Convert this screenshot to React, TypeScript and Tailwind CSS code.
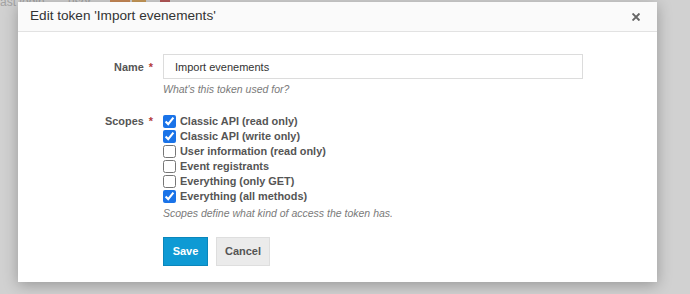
import React from 'react';

const scopes: { label: string; checked: boolean }[] = [
  { label: 'Classic API (read only)', checked: true },
  { label: 'Classic API (write only)', checked: true },
  { label: 'User information (read only)', checked: false },
  { label: 'Event registrants', checked: false },
  { label: 'Everything (only GET)', checked: false },
  { label: 'Everything (all methods)', checked: true },
];

const Required = () => <span className="ml-[5px] text-[#b33a3a]">*</span>;

export default function App() {
  return (
    <div className="relative h-[294px] w-[690px] overflow-hidden bg-[#d1d1d1] font-['Liberation_Sans',Arial,sans-serif]">
      {/* page behind the overlay */}
      <div className="absolute left-0 top-[-7px] text-[12px] text-[#a3a3a3]">ast login &nbsp; &nbsp; &nbsp; user</div>
      <div className="absolute left-[110px] top-0 flex h-[2px] gap-[2px]">
        <div className="w-[20px] bg-[#c98a57]" />
        <div className="w-[14px] bg-[#c99a5a]" />
        <div className="ml-[12px] w-[10px] bg-[#b65a5a]" />
      </div>

      {/* modal */}
      <div className="absolute left-[18px] top-[2px] h-[280px] w-[639px] bg-white shadow-[0_3px_14px_rgba(0,0,0,0.28)]">
        <div className="flex h-[30px] items-center justify-between border-b border-[#e2e2e2] bg-[#fafafa] pl-[12px] pr-[17px]">
          <h4 className="text-[13.6px] text-[#333]">Edit token 'Import evenements'</h4>
          <svg width="8" height="8" viewBox="0 0 10 10" className="mt-[1px]">
            <path d="M1.5 1.5 L8.5 8.5 M8.5 1.5 L1.5 8.5" stroke="#666" strokeWidth="2.4" strokeLinecap="square" />
          </svg>
        </div>

        <div className="pt-[22px] text-[10.9px] text-[#555]">
          {/* Name */}
          <div className="flex">
            <div className="w-[145px] pr-[10px] pt-[5px] text-right font-bold">
              Name<Required />
            </div>
            <div className="w-[420px]">
              <input
                type="text"
                defaultValue="Import evenements"
                className="h-[25px] w-full border border-[#dcdcdc] px-[11px] text-[11px] text-[#333] outline-none"
              />
              <p className="mt-[3px] text-[10.5px] italic text-[#7a7a7a]">What's this token used for?</p>
            </div>
          </div>

          {/* Scopes */}
          <div className="mt-[16px] flex">
            <div className="w-[145px] pr-[10px] text-right font-bold leading-[15px]">
              Scopes<Required />
            </div>
            <div>
              {scopes.map((s) => (
                <label key={s.label} className="flex h-[15px] items-center gap-[4px] font-bold">
                  <input type="checkbox" defaultChecked={s.checked} className="m-0 h-[13px] w-[13px] accent-[#1a73e8]" />
                  <span>{s.label}</span>
                </label>
              ))}
              <p className="mt-[2px] text-[10.5px] italic text-[#7a7a7a]">Scopes define what kind of access the token has.</p>
            </div>
          </div>

          {/* Buttons */}
          <div className="mt-[15px] flex gap-[8px] pl-[145px]">
            <button className="h-[29px] w-[45px] border border-[#0a86bb] bg-[#0e9ad4] text-[11px] font-bold text-white">Save</button>
            <button className="h-[29px] w-[54px] border border-[#dedede] bg-[#ebebeb] text-[11px] font-bold text-[#555]">Cancel</button>
          </div>
        </div>
      </div>
    </div>
  );
}
